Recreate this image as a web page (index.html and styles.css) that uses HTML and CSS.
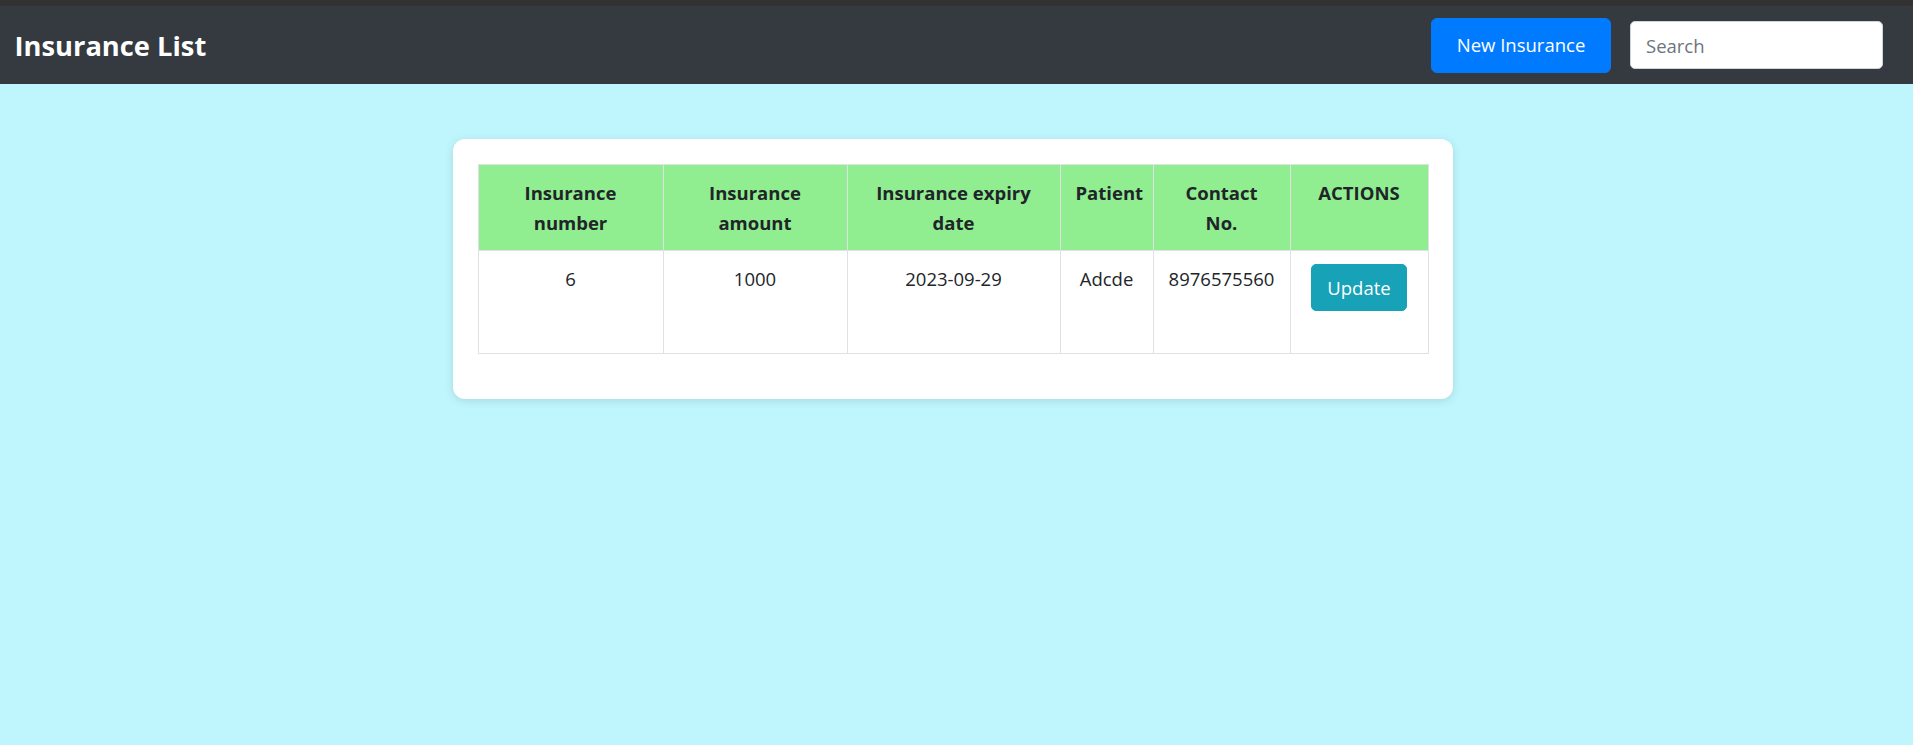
FILE: index.html
```html
<!DOCTYPE html>
<html lang="en">
<head>
<meta charset="utf-8">
<title>Insurance List</title>
<link rel="stylesheet" href="styles.css">
</head>
<body>
<div class="topbar"></div>
<nav class="navbar">
  <h1 class="brand">Insurance List</h1>
  <div class="nav-actions">
    <button class="btn btn-primary">New Insurance</button>
    <input class="search" type="text" placeholder="Search">
  </div>
</nav>
<main class="content">
  <div class="card">
    <table class="table">
      <colgroup>
        <col class="c-num">
        <col class="c-amt">
        <col class="c-exp">
        <col class="c-pat">
        <col class="c-con">
        <col class="c-act">
      </colgroup>
      <thead>
        <tr>
          <th>Insurance number</th>
          <th>Insurance amount</th>
          <th>Insurance expiry date</th>
          <th>Patient</th>
          <th>Contact<br>No.</th>
          <th>ACTIONS</th>
        </tr>
      </thead>
      <tbody>
        <tr>
          <td>6</td>
          <td>1000</td>
          <td>2023-09-29</td>
          <td>Adcde</td>
          <td>8976575560</td>
          <td><button class="btn btn-info">Update</button></td>
        </tr>
      </tbody>
    </table>
  </div>
</main>
</body>
</html>
```
FILE: styles.css
```css
html, body {
  margin: 0;
  padding: 0;
}

body {
  background: #bff6fd;
  font-family: "Open Sans", "Noto Sans", sans-serif;
  font-size: 18.5px;
  line-height: 30px;
  color: #212529;
  min-height: 100vh;
}

.topbar {
  height: 6px;
  background: #323232;
}

.navbar {
  display: flex;
  align-items: center;
  justify-content: space-between;
  height: 78px;
  padding: 0 30px 0 14.5px;
  background: #343a40;
}

.brand {
  margin: 0;
  padding-top: 2px;
  font-size: 27.3px;
  line-height: 36px;
  font-weight: 700;
  color: #fff;
}

.nav-actions {
  display: flex;
  align-items: center;
  gap: 19px;
}

.btn {
  font-family: inherit;
  font-size: 18.5px;
  line-height: 30px;
  border: 1px solid transparent;
  color: #fff;
  cursor: pointer;
  display: inline-block;
}

.btn-primary {
  background: #007bff;
  border-color: #007bff;
  padding: 11.5px 24.7px;
  border-radius: 6px;
}

.btn-info {
  background: #17a2b8;
  border-color: #17a2b8;
  padding: 7.5px 15px;
  border-radius: 5px;
}

.search {
  box-sizing: border-box;
  width: 253px;
  height: 48px;
  padding: 7.5px 15px;
  font-family: inherit;
  font-size: 18.5px;
  border: 1px solid #ced4da;
  border-radius: 5px;
  background: #fff;
  color: #495057;
}

.search::placeholder {
  color: #6c757d;
}

.content {
  padding: 55px 8px 0 0;
}

.card {
  box-sizing: border-box;
  width: 1000px;
  margin: 0 auto;
  padding: 25px;
  background: #fff;
  border-radius: 12px;
  box-shadow: 0 2px 10px rgba(0, 0, 0, 0.12);
}

.table {
  width: 100%;
  border-collapse: collapse;
  table-layout: fixed;
  margin-bottom: 20px;
}

.c-num { width: 185px; }
.c-amt { width: 184px; }
.c-exp { width: 213px; }
.c-pat { width: 93px; }
.c-con { width: 137px; }
.c-act { width: 138px; }

.table th,
.table td {
  border: 1px solid #dee2e6;
  text-align: center;
  vertical-align: top;
  padding: 13px 15px 12px;
}

.table th {
  background: #90ee90;
  font-weight: 700;
}

.table td {
  box-sizing: border-box;
  height: 103px;
}
```
